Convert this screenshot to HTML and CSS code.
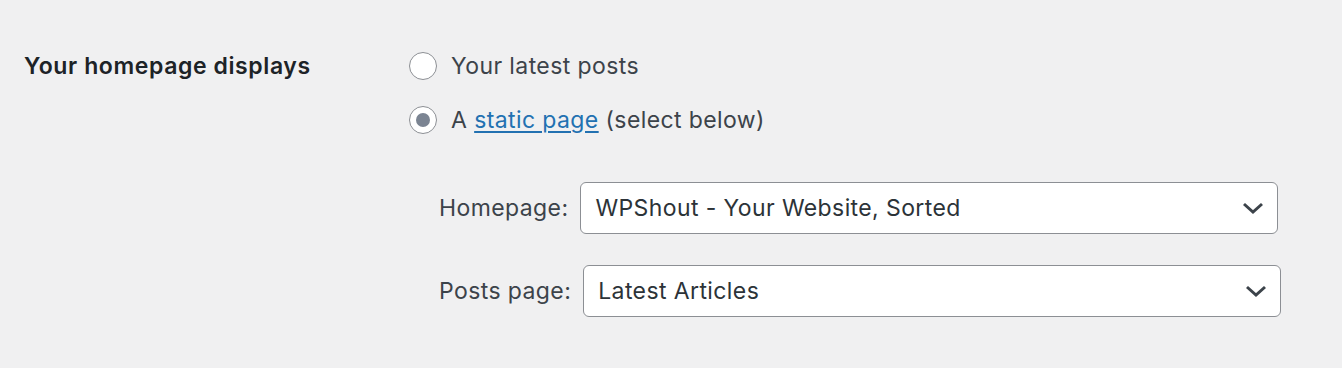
FILE: index.html
```html
<!DOCTYPE html>
<html lang="en">
<head>
  <meta charset="UTF-8" />
  <title>Reading Settings</title>
  <link rel="stylesheet" href="styles.css">
</head>
<body>
<div class="form-row">
  <div class="row-label">Your homepage displays</div>
  <div class="row-field">
    <label class="radio-line">
      <span class="radio"></span>
      Your latest posts
    </label>
    <label class="radio-line">
      <span class="radio checked"></span>
      A&nbsp;<a href="#">static page</a>&nbsp;(select below)
    </label>
    <div class="page-selects">
      <div class="select-line">
        <span class="select-label">Homepage:</span>
        <div class="select-box">
          <span>WPShout - Your Website, Sorted</span>
          <svg class="chevron" width="22" height="12" viewBox="0 0 22 12"><path d="M2 2 L11 10 L20 2" fill="none" stroke="#3c434a" stroke-width="3"/></svg>
        </div>
      </div>
      <div class="select-line">
        <span class="select-label">Posts page:</span>
        <div class="select-box">
          <span>Latest Articles</span>
          <svg class="chevron" width="22" height="12" viewBox="0 0 22 12"><path d="M2 2 L11 10 L20 2" fill="none" stroke="#3c434a" stroke-width="3"/></svg>
        </div>
      </div>
    </div>
  </div>
</div>
</body>
</html>
```

FILE: styles.css
```css
* { margin: 0; padding: 0; box-sizing: border-box; }
body {
  font-family: Inter, "Noto Sans", sans-serif;
  background: #f0f0f1;
  color: #3c434a;
  font-size: 23px;
  letter-spacing: 0.4px;
}
.form-row {
  display: flex;
  padding: 50px 0 0 24px;
}
.row-label {
  width: 385px;
  font-weight: 600;
  color: #1d2327;
  line-height: 32px;
  letter-spacing: 0.6px;
}
.row-field { flex: 1; }
.radio-line {
  display: flex;
  align-items: center;
  height: 32px;
  margin-bottom: 22px;
}
.radio {
  width: 28px;
  height: 28px;
  border: 1px solid #8c8f94;
  border-radius: 50%;
  background: #fff;
  margin-right: 14px;
  display: flex;
  align-items: center;
  justify-content: center;
}
.radio.checked::after {
  content: "";
  width: 14px;
  height: 14px;
  border-radius: 50%;
  background: #7b8492;
}
a { color: #2271b1; text-decoration: underline; text-underline-offset: 3px; }
.page-selects {
  padding: 24px 0 0 30px;
}
.select-line {
  display: flex;
  align-items: center;
  margin-bottom: 31px;
}
.select-label { margin-right: 12px; }
.select-box {
  width: 698px;
  height: 52px;
  background: #fff;
  border: 1px solid #8c8f94;
  border-radius: 6px;
  display: flex;
  align-items: center;
  justify-content: space-between;
  padding: 0 13px 0 14px;
  color: #2c3338;
}
```
